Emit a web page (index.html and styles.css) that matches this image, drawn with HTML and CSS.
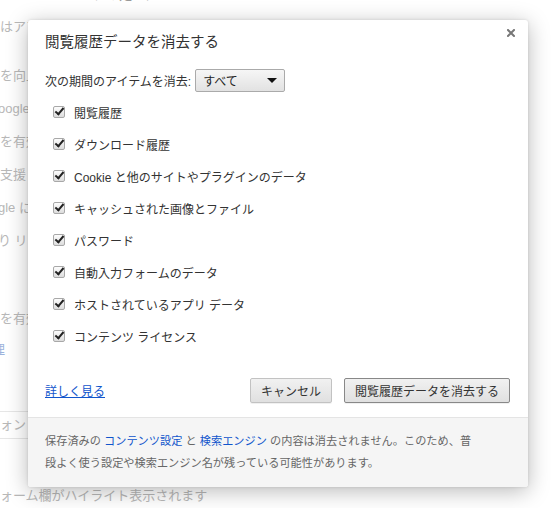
FILE: index.html
```html
<!DOCTYPE html>
<html lang="ja">
<head>
    <meta charset="UTF-8">
    <title>閲覧履歴データを消去する</title>
    <link rel="stylesheet" href="styles.css">
</head>
<body>
    <div class="page">
        <div class="bg-line top-cut">ータの処理について</div>
        <div class="bg-line first">はアプリ</div>
        <div class="bg-line gap-lg">を向上</div>
        <div class="bg-line shift">oogle</div>
        <div class="bg-line">を有効</div>
        <div class="bg-line">支援</div>
        <div class="bg-line shift">gle に</div>
        <div class="bg-line shift">り リク</div>
        <div class="bg-line gap-xl">を有効</div>
        <div class="bg-line bg-link">理</div>
        <div class="bg-input">ォント</div>
        <div class="bg-line bottom">ォーム欄がハイライト表示されます</div>
    </div>

    <div class="dialog">
        <button class="close" aria-label="閉じる">
            <svg width="8" height="8" viewBox="0 0 8 8">
                <path d="M1 1 L7 7 M7 1 L1 7" stroke="#777" stroke-width="2" stroke-linecap="square"/>
            </svg>
        </button>

        <div class="dialog-body">
            <h1>閲覧履歴データを消去する</h1>

            <div class="period">
                <span>次の期間のアイテムを消去:</span>
                <div class="select">
                    <span>すべて</span>
                    <span class="arrow"></span>
                </div>
            </div>

            <ul class="items">
                <li><span class="check"></span>閲覧履歴</li>
                <li><span class="check"></span>ダウンロード履歴</li>
                <li><span class="check"></span>Cookie と他のサイトやプラグインのデータ</li>
                <li><span class="check"></span>キャッシュされた画像とファイル</li>
                <li><span class="check"></span>パスワード</li>
                <li><span class="check"></span>自動入力フォームのデータ</li>
                <li><span class="check"></span>ホストされているアプリ データ</li>
                <li><span class="check"></span>コンテンツ ライセンス</li>
            </ul>

            <div class="actions">
                <a href="#" class="more">詳しく見る</a>
                <div class="buttons">
                    <button class="btn">キャンセル</button>
                    <button class="btn primary">閲覧履歴データを消去する</button>
                </div>
            </div>
        </div>

        <div class="dialog-footer">
            <p>保存済みの <a href="#">コンテンツ設定</a> と <a href="#">検索エンジン</a> の内容は消去されません。このため、普段よく使う設定や検索エンジン名が残っている可能性があります。</p>
        </div>
    </div>
</body>
</html>
```

FILE: styles.css
```css
body {
    margin: 0;
    background: #fff;
    font-family: "Liberation Sans", "Noto Sans CJK JP", sans-serif;
    font-size: 12px;
    color: #333;
    overflow: hidden;
    height: 508px;
}

/* page behind the dialog */
.page {
    position: relative;
    color: #b8b8b8;
    font-size: 13px;
}

.bg-line {
    height: 20px;
    line-height: 20px;
    margin-top: 13px;
    white-space: nowrap;
}

.top-cut {
    margin-top: -15px;
    padding-left: 80px;
    color: #999;
}

.first {
    margin-top: 12px;
}

.gap-lg {
    margin-top: 29px;
}

.shift {
    margin-left: -2px;
}

.gap-xl {
    margin-top: 58px;
}

.bg-link {
    color: #9db3dc;
    margin-top: 11px;
    margin-left: -8px;
}

.bg-input {
    margin-top: 51px;
    width: 120px;
    height: 26px;
    line-height: 26px;
    border-top: 1px solid #e6e6e6;
    border-bottom: 1px solid #e6e6e6;
    white-space: nowrap;
}

.bottom {
    margin-top: 47px;
}

/* dialog */
.dialog {
    position: absolute;
    left: 28px;
    top: 20px;
    width: 500px;
    height: 467px;
    background: #fff;
    border-radius: 3px;
    box-shadow: 0 4px 22px rgba(0, 0, 0, 0.28), 0 0 3px rgba(0, 0, 0, 0.12);
    display: flex;
    flex-direction: column;
    overflow: hidden;
}

.close {
    position: absolute;
    top: 9px;
    right: 13px;
    border: none;
    background: none;
    padding: 0;
    width: 8px;
    height: 8px;
    cursor: pointer;
}

.close svg {
    display: block;
}

.dialog-body {
    flex: 1;
    padding: 12px 18px 0 17px;
}

h1 {
    margin: 0;
    font-size: 14.5px;
    font-weight: normal;
    line-height: 20px;
    color: #333;
}

.period {
    display: flex;
    align-items: center;
    margin-top: 17px;
    height: 23px;
}

.select {
    margin-left: 4px;
    width: 74px;
    height: 21px;
    border: 1px solid #aaa;
    border-radius: 2px;
    background: linear-gradient(#f6f6f6, #e2e2e2);
    display: flex;
    align-items: center;
    justify-content: space-between;
    padding: 0 7px;
    color: #222;
}

.arrow {
    width: 0;
    height: 0;
    border-left: 5px solid transparent;
    border-right: 5px solid transparent;
    border-top: 5px solid #111;
}

.items {
    list-style: none;
    margin: 4px 0 0;
    padding: 0;
}

.items li {
    display: flex;
    align-items: center;
    height: 32px;
    padding-left: 8px;
    color: #333;
}

.check {
    position: relative;
    width: 10px;
    height: 10px;
    margin-right: 9px;
    border: 1px solid #a8a8a8;
    border-radius: 2px;
    background: linear-gradient(#fdfdfd, #dcdcdc);
}

.check::after {
    content: "";
    position: absolute;
    left: 3px;
    top: -1px;
    width: 3px;
    height: 7px;
    border-right: 2.5px solid #222;
    border-bottom: 2.5px solid #222;
    transform: rotate(40deg);
}

.actions {
    display: flex;
    align-items: center;
    justify-content: space-between;
    margin-top: 26px;
}

.more {
    color: #15c;
    text-decoration: underline;
}

.buttons {
    display: flex;
    gap: 12px;
}

.btn {
    font-family: "Liberation Sans", "Noto Sans CJK JP", sans-serif;
    font-size: 12px;
    color: #333;
    height: 25px;
    padding: 0 10px;
    border: 1px solid #c2c2c2;
    border-radius: 2px;
    background: linear-gradient(#f1f1f1, #e0e0e0);
    box-shadow: 0 1px 0 rgba(0, 0, 0, 0.06);
    cursor: pointer;
}

.btn.primary {
    border-color: #888;
}

.dialog-footer {
    height: 70px;
    box-sizing: border-box;
    background: #f5f5f5;
    border-top: 1px solid #e4e4e4;
    padding: 12px 17px 0;
}

.dialog-footer p {
    margin: 0;
    max-width: 432px;
    font-size: 11.2px;
    line-height: 22px;
    color: #666;
}

.dialog-footer a {
    color: #15c;
    text-decoration: none;
}
```
